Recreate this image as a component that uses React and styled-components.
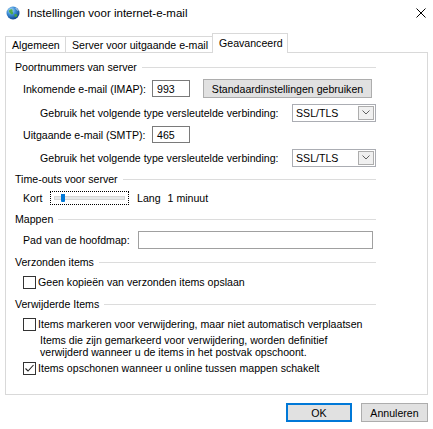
import React from "react";
import styled, { createGlobalStyle } from "styled-components";

const Global = createGlobalStyle`
  html, body { margin: 0; padding: 0; background: #fff; }
  body {
    font-family: "Liberation Sans", Arial, sans-serif;
    font-size: 10.6px;
    color: #000;
  }
  #root { width: 433px; height: 429px; }
`;

const Window = styled.div`
  width: 433px;
  height: 429px;
  background: #fff;
  display: flex;
  flex-direction: column;
  overflow: hidden;
`;

const TitleBar = styled.div`
  height: 26px;
  display: flex;
  align-items: center;
  padding: 0 7px 0 6px;
`;

const Title = styled.div`
  flex: 1;
  margin-left: 7px;
  font-size: 11.5px;
  color: #000;
`;

const TabStrip = styled.div`
  display: flex;
  align-items: flex-end;
  height: 19px;
  margin: 7px 0 0 5px;
`;

const Tab = styled.div`
  box-sizing: border-box;
  width: ${(p) => p.$w}px;
  height: ${(p) => (p.$active ? "20px" : "16px")};
  margin-bottom: ${(p) => (p.$active ? "-1px" : "0")};
  margin-left: ${(p) => (p.$first ? "0" : "-1px")};
  padding: 0 0 ${(p) => (p.$active ? "2px" : "0")} 6px;
  display: flex;
  align-items: center;
  border: 1px solid #d9d9d9;
  border-bottom: none;
  background: #fff;
  position: relative;
  z-index: ${(p) => (p.$active ? 2 : 1)};
  white-space: nowrap;
  overflow: hidden;
`;

const Panel = styled.div`
  box-sizing: border-box;
  margin-left: 5px;
  width: 423px;
  height: 343px;
  border: 1px solid #d9d9d9;
  padding: 7px 0 0 9px;
  display: flex;
  flex-direction: column;
`;

const GroupHeader = styled.div`
  display: flex;
  align-items: center;
  width: 361px;
  height: 14px;
  margin-top: ${(p) => p.$mt || 0}px;
  white-space: nowrap;
  &::after {
    content: "";
    flex: 1;
    height: 1px;
    background: #dcdcdc;
    margin-left: 5px;
  }
`;

const Row = styled.div`
  display: flex;
  align-items: center;
  height: ${(p) => p.$h || 19}px;
  margin-top: ${(p) => p.$mt || 0}px;
  padding-left: ${(p) => p.$indent || 0}px;
  white-space: nowrap;
`;

const Label = styled.div`
  width: ${(p) => p.$w}px;
  flex: none;
`;

const TextBox = styled.div`
  box-sizing: border-box;
  width: ${(p) => p.$w}px;
  height: ${(p) => p.$h || 17}px;
  border: 1px solid ${(p) => p.$border || "#7a7a7a"};
  padding-left: 4px;
  display: flex;
  align-items: center;
  background: #fff;
  color: #000;
`;

const Button = styled.div`
  box-sizing: border-box;
  width: ${(p) => p.$w}px;
  height: 19px;
  margin-left: ${(p) => p.$ml || 0}px;
  background: #e1e1e1;
  border: 1px solid ${(p) => (p.$primary ? "#0078d7" : "#adadad")};
  box-shadow: ${(p) => (p.$primary ? "inset 0 0 0 1px #0078d7" : "none")};
  display: flex;
  align-items: center;
  justify-content: center;
`;

const Select = styled.div`
  box-sizing: border-box;
  width: 84px;
  height: 18px;
  border: 1px solid #abadb3;
  display: flex;
  align-items: center;
  justify-content: space-between;
  padding: 0 1px 0 3px;
  background: #fff;
`;

const DropButton = styled.div`
  box-sizing: border-box;
  width: 16px;
  height: 14px;
  border: 1px solid #adadad;
  background: #f0f0f0;
  display: flex;
  align-items: center;
  justify-content: center;
`;

const SliderBox = styled.div`
  box-sizing: border-box;
  position: relative;
  width: 79px;
  height: 14px;
  border: 1px dotted #000;
  display: flex;
  align-items: center;
  padding: 0 3px;
`;

const Track = styled.div`
  box-sizing: border-box;
  flex: 1;
  height: 4px;
  background: #e7eaea;
  border: 1px solid #d6d6d6;
`;

const Thumb = styled.div`
  position: absolute;
  left: 10px;
  top: 2px;
  width: 4px;
  height: 8px;
  background: #0078d7;
  border-radius: 0 0 1px 1px;
`;

const Spacer = styled.span`
  margin-left: ${(p) => p.$ml}px;
`;

const Check = styled.div`
  box-sizing: border-box;
  width: 13px;
  height: 13px;
  border: 1px solid #333;
  background: #fff;
  margin-right: 2px;
  display: flex;
  align-items: center;
  justify-content: center;
  flex: none;
`;

const Description = styled.div`
  margin-top: ${(p) => p.$mt || 0}px;
  padding-left: 25px;
  line-height: 12px;
`;

const Footer = styled.div`
  display: flex;
  justify-content: flex-end;
  gap: 9px;
  padding-right: 5px;
  margin-top: 8px;
`;

const GlobeIcon = () => (
  <svg width="14" height="14" viewBox="0 0 14 14">
    <defs>
      <radialGradient id="g" cx="0.35" cy="0.3" r="0.75">
        <stop offset="0" stopColor="#bfe4fb" />
        <stop offset="0.45" stopColor="#3d8fd8" />
        <stop offset="1" stopColor="#0c3f86" />
      </radialGradient>
    </defs>
    <circle cx="7" cy="7" r="6.5" fill="url(#g)" />
    <path d="M3 4.5c1-1.2 2.6-1.6 3.4-0.8.6.6-.2 1.5.4 2.2.7.8.3 2-.6 2.4-.9.4-1.6-.5-2.2-1.2C3.4 6.3 2.5 5.4 3 4.5z" fill="#4aa83a" opacity="0.9" />
    <path d="M8.6 8.2c.8-.3 2-.1 2.6.6.4.5-.1 1.6-.9 2.1-.7.4-1.4.2-1.6-.5-.2-.7-.8-1.8-.1-2.2z" fill="#4aa83a" opacity="0.9" />
    <path d="M9.5 2.2c1.2.5 2.2 1.5 2.6 2.7" stroke="#fff" strokeWidth="0.9" fill="none" opacity="0.8" />
  </svg>
);

const CloseIcon = () => (
  <svg width="10" height="10" viewBox="0 0 10 10">
    <path d="M0.5 0.5L9.5 9.5M9.5 0.5L0.5 9.5" stroke="#000" strokeWidth="1" />
  </svg>
);

const Chevron = () => (
  <svg width="8" height="5" viewBox="0 0 8 5">
    <path d="M0.5 0.5L4 4L7.5 0.5" stroke="#606060" strokeWidth="1" fill="none" />
  </svg>
);

const CheckMark = () => (
  <svg width="11" height="11" viewBox="0 0 11 11">
    <path d="M1.5 5.5L4 8L9.5 2" stroke="#222" strokeWidth="1.1" fill="none" />
  </svg>
);

const CheckRow = ({ checked, mt, children }) => (
  <Row $h={14} $mt={mt} $indent={8}>
    <Check>{checked && <CheckMark />}</Check>
    <span>{children}</span>
  </Row>
);

const SecurityRow = ({ mt }) => (
  <Row $mt={mt} $indent={25}>
    <Label $w={252}>Gebruik het volgende type versleutelde verbinding:</Label>
    <Select>
      <span>SSL/TLS</span>
      <DropButton>
        <Chevron />
      </DropButton>
    </Select>
  </Row>
);

export default function App() {
  return (
    <>
      <Global />
      <Window>
        <TitleBar>
          <GlobeIcon />
          <Title>Instellingen voor internet-e-mail</Title>
          <CloseIcon />
        </TitleBar>

        <TabStrip>
          <Tab $first $w={61}>Algemeen</Tab>
          <Tab $w={148}>Server voor uitgaande e-mail</Tab>
          <Tab $active $w={76}>Geavanceerd</Tab>
        </TabStrip>

        <Panel>
          <GroupHeader>Poortnummers van server</GroupHeader>
          <Row $mt={5} $indent={8}>
            <Label $w={129}>Inkomende e-mail (IMAP):</Label>
            <TextBox $w={38}>993</TextBox>
            <Button $w={169} $ml={13}>Standaardinstellingen gebruiken</Button>
          </Row>
          <SecurityRow mt={5} />
          <Row $mt={3} $indent={8}>
            <Label $w={129}>Uitgaande e-mail (SMTP):</Label>
            <TextBox $w={38}>465</TextBox>
          </Row>
          <SecurityRow mt={4} />

          <GroupHeader $mt={5}>Time-outs voor server</GroupHeader>
          <Row $h={14} $mt={5} $indent={8}>
            <Label $w={27}>Kort</Label>
            <SliderBox>
              <Track />
              <Thumb />
            </SliderBox>
            <Spacer $ml={8}>Lang</Spacer>
            <Spacer $ml={7}>1 minuut</Spacer>
          </Row>

          <GroupHeader $mt={7}>Mappen</GroupHeader>
          <Row $mt={4} $indent={8}>
            <Label $w={115}>Pad van de hoofdmap:</Label>
            <TextBox $w={235} $h={18} $border="#a0a0a0" />
          </Row>

          <GroupHeader $mt={6}>Verzonden items</GroupHeader>
          <CheckRow mt={6}>Geen kopieën van verzonden items opslaan</CheckRow>

          <GroupHeader $mt={8}>Verwijderde Items</GroupHeader>
          <CheckRow mt={6}>Items markeren voor verwijdering, maar niet automatisch verplaatsen</CheckRow>
          <Description $mt={3}>
            Items die zijn gemarkeerd voor verwijdering, worden definitief
            <br />
            verwijderd wanneer u de items in het postvak opschoont.
          </Description>
          <CheckRow mt={3} checked>
            Items opschonen wanneer u online tussen mappen schakelt
          </CheckRow>
        </Panel>

        <Footer>
          <Button $w={66} $primary>OK</Button>
          <Button $w={67}>Annuleren</Button>
        </Footer>
      </Window>
    </>
  );
}
